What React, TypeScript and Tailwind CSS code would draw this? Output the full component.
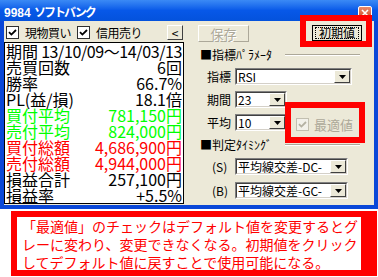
import React from 'react'

const jp = "font-['Noto_Sans_CJK_JP','Noto_Sans',sans-serif]"

type Row = { label: string; value: string; color: string }

const rows: Row[] = [
  { label: '売買回数', value: '6回', color: 'text-black' },
  { label: '勝率', value: '66.7%', color: 'text-black' },
  { label: 'PL(益/損)', value: '18.1倍', color: 'text-black' },
  { label: '買付平均', value: '781,150円', color: 'text-[#00ff00]' },
  { label: '売付平均', value: '824,000円', color: 'text-[#00ff00]' },
  { label: '買付総額', value: '4,686,900円', color: 'text-[#ff0000]' },
  { label: '売付総額', value: '4,944,000円', color: 'text-[#ff0000]' },
  { label: '損益合計', value: '257,100円', color: 'text-black' },
  { label: '損益率', value: '+5.5%', color: 'text-black' },
]

function CheckBox({ disabled }: { disabled?: boolean }) {
  return (
    <span
      className={`flex h-[13px] w-[13px] shrink-0 items-center justify-center border ${
        disabled ? 'border-[#c2bfb0] bg-[#f2f1ea]' : 'border-[#303030] bg-white'
      }`}
    >
      <svg width="9" height="9" viewBox="0 0 9 9">
        <path
          d="M1 4.2l2.4 2.4L8 2"
          fill="none"
          stroke={disabled ? '#b4b1a2' : '#000'}
          strokeWidth="1.8"
        />
      </svg>
    </span>
  )
}

function Combo({ text, width }: { text: string; width: string }) {
  return (
    <div
      className={`${width} flex h-[17px] border border-t-[#808080] border-l-[#808080] border-r-white border-b-white`}
    >
      <div className="flex min-w-0 flex-1 border border-t-[#404040] border-l-[#404040] border-r-[#d4d0c8] border-b-[#d4d0c8] bg-white">
        <span className="min-w-0 flex-1 overflow-hidden whitespace-nowrap pl-[1px] text-[12px] leading-[13px] text-black">
          {text}
        </span>
        <span className="flex w-[16px] shrink-0 items-center justify-center border border-t-white border-l-white border-r-[#404040] border-b-[#404040] bg-[#ece9d8]">
          <svg width="7" height="4" viewBox="0 0 7 4">
            <path d="M0 0h7L3.5 4z" fill="#000" />
          </svg>
        </span>
      </div>
    </div>
  )
}

function Header({ text }: { text: string }) {
  return (
    <div className="flex h-[14px] items-center">
      <span className="whitespace-nowrap pl-[2px] text-[12px] leading-[14px] text-black">{text}</span>
      <div className="ml-auto mr-[14px] h-[2px] w-[75px] border-t border-b border-t-[#aca899] border-b-white" />
    </div>
  )
}

export default function App() {
  return (
    <div className={`relative h-[277px] w-[378px] overflow-hidden bg-white ${jp}`}>
      {/* window */}
      <div className="flex h-[209px] flex-col">
        <div className="flex h-[21px] bg-gradient-to-b from-[#3b8af5] via-[#0758e8] to-[#0452dc]">
          <span className="mt-[5px] whitespace-nowrap pl-[4px] text-[12px] font-bold leading-[13px] text-white">
            <span className="font-['Liberation_Sans',sans-serif]">9984 </span>
            <span className="tracking-[-2px]">ソフトバンク</span>
          </span>
          <span className="ml-auto mr-[6px] mt-[6px] flex h-[14px] w-[14px] items-center justify-center rounded-[2px] border border-white bg-gradient-to-b from-[#e98a6b] to-[#c9431d]">
            <svg width="8" height="8" viewBox="0 0 8 8">
              <path d="M1 1l6 6M7 1L1 7" stroke="#fff" strokeWidth="1.6" />
            </svg>
          </span>
        </div>

        <div className="flex flex-1 border-x-4 border-b-4 border-[#0a47d8] bg-[#ece9d8]">
          {/* left column */}
          <div className="flex w-[180px] flex-col">
            <div className="mt-[4px] flex h-[15px] items-center text-[12px] text-black">
              <div className="ml-[2px] flex w-[71px] items-center gap-[6px]">
                <CheckBox />
                <span className="whitespace-nowrap tracking-[-0.5px]">現物買い</span>
              </div>
              <div className="flex items-center gap-[6px]">
                <CheckBox />
                <span className="whitespace-nowrap tracking-[-0.5px]">信用売り</span>
              </div>
              <span className="ml-auto mr-[1px] flex h-[15px] w-[16px] items-center justify-center border border-t-white border-l-white border-r-[#404040] border-b-[#404040] bg-[#ece9d8] text-[12px] leading-none">
                &lt;
              </span>
            </div>
            <div className="mt-[2px] h-[162px] w-[180px] overflow-hidden whitespace-nowrap border border-black bg-white px-[1px] text-[16px] leading-[16px]">
              <div className="flex h-[16px] text-black">
                <span>期間</span>
                <span className="ml-auto tracking-[-0.4px]">13/10/09～14/03/13</span>
              </div>
              {rows.map((r) => (
                <div key={r.label} className={`flex h-[16px] justify-between ${r.color}`}>
                  <span>{r.label}</span>
                  <span>{r.value}</span>
                </div>
              ))}
            </div>
          </div>

          {/* right column */}
          <div className="flex flex-1 flex-col pl-[14px] text-[12px] text-black">
            <div className="mt-[4px] flex h-[17px] items-start">
              <span className="flex h-[17px] w-[51px] items-center justify-center border border-t-white border-l-white border-r-[#aca899] border-b-[#aca899] text-[13px] text-[#aca899] [text-shadow:1px_1px_0_#fff]">
                保存
              </span>
              <span className="ml-auto mr-[12px] flex h-[16px] w-[50px] items-center justify-center border border-black bg-[#ece9d8]">
                <span className="flex h-[12px] w-[44px] items-center justify-center border border-dotted border-black text-[12px] leading-none">
                  初期値
                </span>
              </span>
            </div>

            <div className="mt-[6px]">
              <Header text="■指標ﾊﾟﾗﾒｰﾀ" />
            </div>

            <div className="mt-[6px] flex h-[17px] items-center">
              <span className="w-[37px] pl-[9px]">指標</span>
              <Combo text="RSI" width="w-[117px]" />
            </div>
            <div className="mt-[6px] flex h-[17px] items-center">
              <span className="w-[37px] pl-[9px]">期間</span>
              <Combo text="23" width="w-[52px]" />
            </div>
            <div className="mt-[6px] flex h-[17px] items-center">
              <span className="w-[37px] pl-[9px]">平均</span>
              <Combo text="10" width="w-[52px]" />
              <div className="ml-[9px] mt-[4px] flex items-center gap-[5px]">
                <CheckBox disabled />
                <span className="text-[13px] text-[#aca899]">最適値</span>
              </div>
            </div>

            <div className="mt-[7px]">
              <Header text="■判定ﾀｲﾐﾝｸﾞ" />
            </div>

            <div className="mt-[6px] flex h-[17px] items-center">
              <span className="w-[37px] pl-[14px]">(S)</span>
              <Combo text="平均線交差-DC-" width="w-[113px]" />
            </div>
            <div className="mt-[7px] flex h-[17px] items-center">
              <span className="w-[37px] pl-[14px]">(B)</span>
              <Combo text="平均線交差-GC-" width="w-[113px]" />
            </div>
          </div>
        </div>
      </div>

      {/* annotation */}
      <div className="ml-[11px] mt-[2px] h-[65px] w-[366px] whitespace-nowrap border-[6px] border-r-[16px] border-[#ff0000] bg-white pl-[5px] text-[14px] leading-[18px] text-[#ff0000]">
        「最適値」のチェックはデフォルト値を変更するとグ
        <br />
        レーに変わり、変更できなくなる。初期値をクリック
        <br />
        してデフォルト値に戻すことで使用可能になる。
      </div>

      {/* red highlight frames */}
      <div className="absolute left-[300px] top-[15px] h-[32px] w-[72px] border-[6px] border-[#ff0000]" />
      <div className="absolute left-[285px] top-[102px] h-[41px] w-[80px] border-[6px] border-[#ff0000]" />
    </div>
  )
}
